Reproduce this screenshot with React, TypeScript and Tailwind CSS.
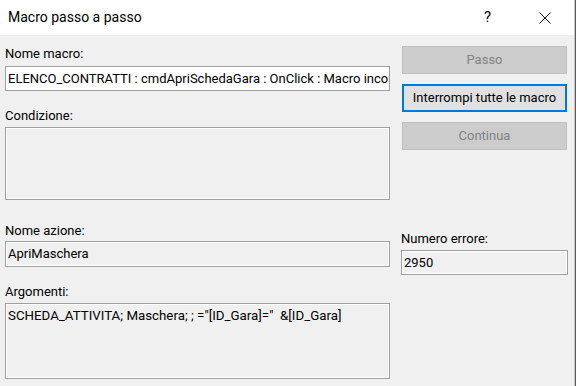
import React from 'react';

const font = { fontFamily: 'Roboto, "Noto Sans", sans-serif' };

const Label = ({ children }: { children: React.ReactNode }) => (
  <div className="h-[16px] leading-[16px] text-[13px] text-black whitespace-nowrap">{children}</div>
);

const Field = ({ className, children }: { className: string; children?: React.ReactNode }) => (
  <div className={`border border-[#a0a0a0] ${className}`}>
    <div className="h-full border border-white bg-[#f0f0f0] overflow-hidden">{children}</div>
  </div>
);

export default function App() {
  return (
    <div className="w-[576px] h-[386px] flex bg-[#f0f0f0] overflow-hidden" style={font}>
      <div className="w-[574px] flex flex-col">
        {/* title bar */}
        <div className="h-[35px] bg-white flex items-center shrink-0">
          <span className="ml-[8px] text-[14px] text-black">Macro passo a passo</span>
          <span className="ml-auto mr-[48px] text-[15px] text-black">?</span>
          <svg width="12" height="12" viewBox="0 0 12 12" className="mr-[23px]">
            <path d="M0.5 0.5 L11.5 11.5 M11.5 0.5 L0.5 11.5" stroke="#111" strokeWidth="1" />
          </svg>
        </div>

        <div className="flex pt-[11px]">
          {/* left column */}
          <div className="w-[385px] ml-[5px] flex flex-col">
            <Label>Nome macro:</Label>
            <div className="mt-[4px] h-[25px] border border-[#a0a0a0] bg-white overflow-hidden flex items-center">
              <span className="pl-[2px] text-[13px] whitespace-nowrap">
                ELENCO_CONTRATTI : cmdApriSchedaGara : OnClick : Macro incorporata : 1
              </span>
            </div>

            <div className="mt-[17px]">
              <Label>Condizione:</Label>
            </div>
            <Field className="mt-[3px] h-[73px]" />

            <div className="mt-[23px]">
              <Label>Nome azione:</Label>
            </div>
            <Field className="mt-[2px] h-[26px]">
              <div className="h-full flex items-center pl-[1px] text-[13px]">ApriMaschera</div>
            </Field>

            <div className="mt-[17px]">
              <Label>Argomenti:</Label>
            </div>
            <Field className="mt-[3px] h-[76px]">
              <div className="pt-[3px] pl-[1px] text-[13.3px] leading-[16px] whitespace-pre">
                {'SCHEDA_ATTIVITA; Maschera; ; ="[ID_Gara]="  &[ID_Gara]'}
              </div>
            </Field>
          </div>

          {/* right column */}
          <div className="ml-[11px] w-[167px] flex flex-col">
            <div className="ml-[1px] w-[165px] h-[28px] bg-[#cccccc] border border-[#bfbfbf] flex items-center justify-center text-[13px] text-[#838383]">
              Passo
            </div>
            <div className="ml-[1px] mt-[10px] w-[165px] h-[28px] bg-[#e1e1e1] border-2 border-[#0078d7] flex items-center justify-center text-[13px] text-black">
              Interrompi tutte le macro
            </div>
            <div className="ml-[1px] mt-[10px] w-[165px] h-[28px] bg-[#cccccc] border border-[#bfbfbf] flex items-center justify-center text-[13px] text-[#838383]">
              Continua
            </div>

            <div className="mt-[81px]">
              <Label>Numero errore:</Label>
            </div>
            <Field className="mt-[3px] h-[25px]">
              <div className="h-full flex items-center pl-[1px] text-[13px]">2950</div>
            </Field>
          </div>
        </div>
      </div>
      <div className="w-[1px] bg-[#c8c8c8]" />
      <div className="w-[1px] bg-[#5a5a5a]" />
    </div>
  );
}
